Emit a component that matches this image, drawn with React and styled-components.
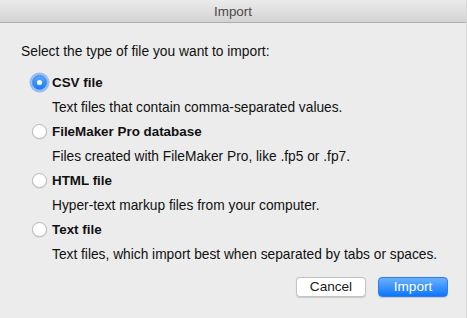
import React, { useState } from "react";
import styled, { createGlobalStyle } from "styled-components";

const GlobalStyle = createGlobalStyle`
  html, body {
    margin: 0;
    padding: 0;
    background: #ececec;
  }
  body {
    font-family: "Liberation Sans", Arial, sans-serif;
    -webkit-font-smoothing: antialiased;
  }
`;

const options = [
  { id: "csv", label: "CSV file", desc: "Text files that contain comma-separated values." },
  { id: "fm", label: "FileMaker Pro database", desc: "Files created with FileMaker Pro, like .fp5 or .fp7." },
  { id: "html", label: "HTML file", desc: "Hyper-text markup files from your computer." },
  { id: "txt", label: "Text file", desc: "Text files, which import best when separated by tabs or spaces." },
];

const App = () => {
  const [selected, setSelected] = useState("csv");

  return (
    <>
      <GlobalStyle />
      <Window>
        <TitleBar>Import</TitleBar>
        <Content>
          <Prompt>Select the type of file you want to import:</Prompt>
          <OptionList>
            {options.map((o) => (
              <Option key={o.id} onClick={() => setSelected(o.id)}>
                <OptionRow>
                  <Radio $checked={selected === o.id} />
                  <Label>{o.label}</Label>
                </OptionRow>
                <Description>{o.desc}</Description>
              </Option>
            ))}
          </OptionList>
          <Buttons>
            <Button>Cancel</Button>
            <Button $primary>Import</Button>
          </Buttons>
        </Content>
      </Window>
    </>
  );
};

const Window = styled.div`
  width: 467px;
  height: 318px;
  display: flex;
  flex-direction: column;
  background: #ececec;
  box-sizing: border-box;
  border-right: 1px solid #d6d6d6;
  overflow: hidden;
`;

const TitleBar = styled.div`
  height: 21px;
  flex: none;
  display: flex;
  align-items: center;
  justify-content: center;
  font-size: 13.4px;
  color: #4a4a4a;
  background: linear-gradient(#ebebeb, #d3d3d3);
  border-bottom: 1px solid #adadad;
  padding-top: 1px;
  box-sizing: content-box;
`;

const Content = styled.div`
  display: flex;
  flex-direction: column;
  padding: 21px 18px 0 21px;
`;

const Prompt = styled.div`
  font-size: 13.8px;
  line-height: 16px;
  color: #111;
`;

const OptionList = styled.div`
  display: flex;
  flex-direction: column;
  gap: 7px;
  margin-top: 14px;
  padding-left: 11px;
`;

const Option = styled.div`
  display: flex;
  flex-direction: column;
  cursor: default;
`;

const OptionRow = styled.div`
  display: flex;
  align-items: center;
  gap: 5px;
  height: 16px;
`;

const Radio = styled.span`
  width: 15px;
  height: 15px;
  border-radius: 50%;
  box-sizing: border-box;
  flex: none;
  position: relative;
  background: ${(p) => (p.$checked ? "linear-gradient(#5aa9fc, #1a7cf7)" : "#fff")};
  border: 1px solid ${(p) => (p.$checked ? "#2a7fe8" : "#b9b9b9")};
  box-shadow: ${(p) =>
    p.$checked ? "0 0 0 2.5px rgba(80, 150, 245, 0.55)" : "0 0.5px 1px rgba(0,0,0,0.12)"};

  &::after {
    content: "";
    display: ${(p) => (p.$checked ? "block" : "none")};
    position: absolute;
    left: 50%;
    top: 50%;
    width: 5px;
    height: 5px;
    margin: -2.5px 0 0 -2.5px;
    border-radius: 50%;
    background: #fff;
  }
`;

const Label = styled.span`
  font-size: 13.4px;
  font-weight: bold;
  color: #111;
`;

const Description = styled.div`
  font-size: 13.75px;
  line-height: 16px;
  color: #111;
  margin-top: 10px;
  padding-left: 20px;
`;

const Buttons = styled.div`
  display: flex;
  justify-content: flex-end;
  gap: 12px;
  margin-top: 14px;
`;

const Button = styled.button`
  width: 70px;
  height: 20px;
  padding: 0;
  border-radius: 4px;
  font-family: "Liberation Sans", Arial, sans-serif;
  font-size: 13.6px;
  line-height: 18px;
  color: ${(p) => (p.$primary ? "#fff" : "#1a1a1a")};
  background: ${(p) => (p.$primary ? "linear-gradient(#6bb1fb, #0d76fd)" : "#fff")};
  border: 1px solid ${(p) => (p.$primary ? "#2d7ef0" : "#c4c4c4")};
  box-shadow: 0 0.5px 1px rgba(0, 0, 0, 0.15);
`;

export default App;
